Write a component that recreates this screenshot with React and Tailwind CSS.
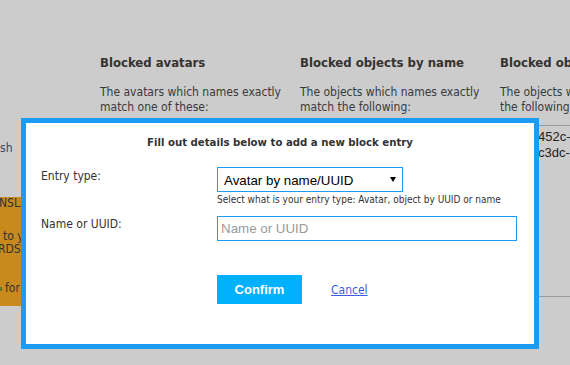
import { useState } from 'react';

const columns = [
  { title: 'Blocked avatars', lines: ['The avatars which names exactly', 'match one of these:'] },
  { title: 'Blocked objects by name', lines: ['The objects which names exactly', 'match the following:'] },
  { title: 'Blocked objects by UUID', lines: ['The objects which UUIDs match', 'the following:'], table: true },
];

const tahoma = "font-['DejaVu_Sans_Condensed','Liberation_Sans',sans-serif]";

export default function App() {
  const [entryType, setEntryType] = useState('avatar');
  const [name, setName] = useState('');

  return (
    <div className="relative w-[570px] h-[365px] overflow-hidden bg-[#cccccc] text-[#333] font-['Liberation_Sans',sans-serif]">
      <div className="flex h-full">
        {/* Left sidebar, mostly hidden behind the dialog */}
        <div className={`w-[100px] shrink-0 flex flex-col ${tahoma}`}>
          <div className="pt-[139px] h-[197px] text-[12px] text-[#3b4a66]">sh</div>
          <div className="h-[109px] bg-[#c8891d] text-[12px] leading-[13px] text-[#333] pt-[0px]">
            <div className="-ml-[1px]">NSLA</div>
            <div className="pl-[3px] mt-[20px]">to y</div>
            <div className="-ml-[2px]">RDS</div>
            <div className="mt-[26px] flex items-center gap-[3px]">
              <span className="w-[2px] h-[4px] bg-[#5a7a2a]" />
              <span>for</span>
            </div>
          </div>
        </div>

        {/* Block list columns */}
        <div className="flex pt-[54px]">
          {columns.map((c) => (
            <div key={c.title} className="w-[200px] shrink-0">
              <h3 className={`text-[13px] font-bold leading-[18px] text-[#333] whitespace-nowrap ${tahoma}`}>
                {c.title}
              </h3>
              <p className={`mt-[13px] text-[12px] leading-[15px] text-[#3a3a3a] whitespace-nowrap ${tahoma}`}>
                {c.lines[0]}
                <br />
                {c.lines[1]}
              </p>
              {c.table && (
                <div className="mt-[10px] border-t border-[#999] pt-[3px] text-[13px] leading-[16px] text-[#222] font-['Liberation_Sans',sans-serif]">
                  <div className="pl-[38px] whitespace-nowrap">452c-a1f0-9e2b</div>
                  <div className="pl-[38px] whitespace-nowrap">c3dc-7b21-44fa</div>
                  <div className="mt-[135px] border-t border-[#999]" />
                </div>
              )}
            </div>
          ))}
        </div>
      </div>

      {/* Modal dialog */}
      <div className="absolute left-[21px] top-[118px] w-[518px] h-[231px] border-[5px] border-[#1b9cf2] bg-white">
        <h2 className={`mt-[12px] text-center text-[11.3px] font-bold leading-[16px] text-[#333] ${tahoma}`}>
          Fill out details below to add a new block entry
        </h2>

        <div className="mt-[16px] pl-[15px] flex">
          <label className={`w-[176px] pt-[1px] text-[12px] leading-[16px] text-[#333] ${tahoma}`}>
            Entry type:
          </label>
          <div>
            <div className="relative w-[186px] h-[25px] border border-[#1b9cf2] bg-white">
              <select
                value={entryType}
                onChange={(e) => setEntryType(e.target.value)}
                className="w-full h-full appearance-none bg-transparent pl-[6px] text-[13.33px] text-black outline-none font-['Liberation_Sans',sans-serif]"
              >
                <option value="avatar">Avatar by name/UUID</option>
                <option value="objname">Object by name</option>
                <option value="objuuid">Object by UUID</option>
              </select>
              <svg
                className="absolute right-[6px] top-[9px] pointer-events-none"
                width="6"
                height="5"
                viewBox="0 0 6 5"
              >
                <path d="M0 0H6L3 5Z" fill="#000" />
              </svg>
            </div>
            <div className={`mt-[2px] text-[10px] leading-[12px] text-[#333] ${tahoma}`}>
              Select what is your entry type: Avatar, object by UUID or name
            </div>
          </div>
        </div>

        <div className="mt-[10px] pl-[15px] flex">
          <label className={`w-[176px] pt-[0px] text-[12px] leading-[16px] text-[#333] ${tahoma}`}>
            Name or UUID:
          </label>
          <input
            value={name}
            onChange={(e) => setName(e.target.value)}
            placeholder="Name or UUID"
            className="w-[300px] h-[25px] border border-[#1b9cf2] px-[3px] text-[13.33px] text-black placeholder-[#9a9a9a] outline-none font-['Liberation_Sans',sans-serif]"
          />
        </div>

        <div className="mt-[34px] pl-[191px] flex items-center gap-[29px]">
          <button className="w-[85px] h-[29px] bg-[#00b1ff] text-white text-[13px] font-bold font-['Liberation_Sans',sans-serif]">
            Confirm
          </button>
          <a href="#" className={`text-[12px] text-[#3b5ee0] underline ${tahoma}`}>
            Cancel
          </a>
        </div>
      </div>
    </div>
  );
}
